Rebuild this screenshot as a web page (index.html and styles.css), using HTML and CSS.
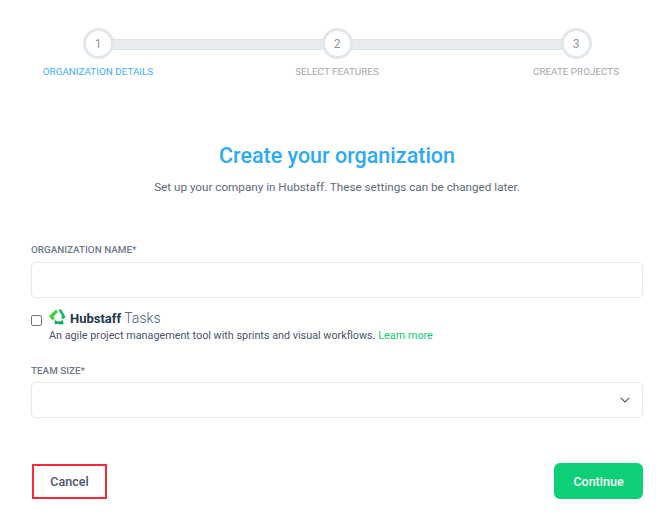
FILE: index.html
```html
<!DOCTYPE html>
<html lang="en">
<head>
<meta charset="utf-8">
<title>Create your organization</title>
<link rel="stylesheet" href="styles.css">
</head>
<body>
<main class="page">
  <ol class="stepper">
    <li class="step step-active"><span class="dot">1</span><span class="step-label">ORGANIZATION DETAILS</span></li>
    <li class="step"><span class="dot">2</span><span class="step-label">SELECT FEATURES</span></li>
    <li class="step"><span class="dot">3</span><span class="step-label">CREATE PROJECTS</span></li>
  </ol>
  <header class="intro">
    <h1>Create your organization</h1>
    <p>Set up your company in Hubstaff. These settings can be changed later.</p>
  </header>
  <form class="form">
    <label class="field-label">ORGANIZATION NAME*</label>
    <div class="input"></div>
    <div class="tasks">
      <span class="checkbox"></span>
      <div class="tasks-body">
        <div class="brand">
          <svg class="logo" width="18" height="18" viewBox="0 0 18 18" aria-hidden="true">
            <path fill="#3fd03c" d="M7 .5 L9 3 L4.5 7.5 L6 10 L3 11 L0 7 Z"/>
            <path fill="#0fb765" d="M9.5 .8 L12 .2 L16.5 8 L14.5 10 L12 9 L13 7 Z"/>
            <path fill="#0aa65c" d="M5.5 11 L8.5 12.5 L11.5 12.5 L14 11 L14.5 15 L11 15.5 L8.5 14.5 L6 15.5 Z"/>
          </svg>
          <span class="brand-name">Hubstaff</span><span class="brand-sub">Tasks</span>
        </div>
        <p class="tasks-text">An agile project management tool with sprints and visual workflows. <a class="learn" href="#">Learn more</a></p>
      </div>
    </div>
    <label class="field-label field-label-team">TEAM SIZE*</label>
    <div class="input select">
      <svg width="10" height="6" viewBox="0 0 10 6" aria-hidden="true"><path d="M.7.8 5 5 9.3.8" fill="none" stroke="#4a5568" stroke-width="1.1"/></svg>
    </div>
    <div class="actions">
      <button type="button" class="btn cancel">Cancel</button>
      <button type="button" class="btn continue">Continue</button>
    </div>
  </form>
</main>
</body>
</html>
```
FILE: styles.css
```css
* { box-sizing: border-box; }
html, body { margin: 0; padding: 0; background: #fff; }
body { font-family: Roboto, "Liberation Sans", sans-serif; color: #4a5568; }
.page { width: 669px; height: 530px; padding: 28px 26px 0 31px; overflow: hidden; }

.stepper { list-style: none; margin: 0; padding: 0 0 0 12px; height: 51px; display: flex; justify-content: space-between; width: 600px; position: relative; }
.stepper::before { content: ""; position: absolute; left: 67px; width: 478px; top: 11px; height: 9px; background: #e6ecf0; border-top: 1px solid #dbe4ea; border-bottom: 1px solid #dbe4ea; }
.step { width: 110px; display: flex; flex-direction: column; align-items: center; position: relative; }
.dot { width: 31px; height: 31px; border-radius: 50%; background: #fff; border: 3px solid #e0e8ee; display: flex; align-items: center; justify-content: center; font-size: 12px; color: #8f98a8; }
.step-label { margin-top: 6px; font-size: 9.9px; line-height: 14px; color: #a3a7ad; white-space: nowrap; }
.step-active .step-label { color: #3cb0f7; }

.intro { margin-top: 64px; text-align: center; }
.intro h1 { margin: 0; font-size: 21.5px; line-height: 26px; font-weight: 500; color: #2daaf5; }
.intro p { margin: 11px 0 0; font-size: 11.7px; line-height: 14px; color: #5f6a7a; }

.form { margin-top: 50px; }
.field-label { display: block; font-size: 9.9px; font-weight: 500; line-height: 12px; color: #6e7a8a; }
.input { margin-top: 6px; height: 36px; border: 1px solid #e4e7ee; border-radius: 5px; background: #fff; }
.select { margin-top: 5px; display: flex; align-items: center; justify-content: flex-end; padding-right: 12px; }

.tasks { display: flex; margin-top: 11px; height: 36px; }
.checkbox { width: 11px; height: 11px; margin-top: 6px; border: 1px solid #767676; border-radius: 2px; flex: none; }
.tasks-body { margin-left: 7px; }
.brand { display: flex; align-items: center; height: 18px; }
.brand-name { margin-left: 3px; font-size: 13px; font-weight: 700; color: #22384d; }
.brand-sub { margin-left: 3px; font-size: 14px; font-weight: 300; letter-spacing: .1px; color: #46596b; }
.tasks-text { margin: 2px 0 0; font-size: 10.8px; line-height: 14px; color: #4a5568; white-space: nowrap; }
.learn { color: #12c97a; text-decoration: none; }
.field-label-team { margin-top: 20px; }

.actions { display: flex; justify-content: space-between; align-items: flex-end; margin-top: 45px; }
.btn { font-family: inherit; font-size: 12.5px; font-weight: 500; border: 0; padding: 0; height: 36px; }
.cancel { width: 75px; height: 35px; margin-left: 1px; background: #fff; border: 2px solid #f7293a; color: #4a5568; }
.continue { width: 89px; background: #0ccf78; border-radius: 6px; color: #fff; }
```
